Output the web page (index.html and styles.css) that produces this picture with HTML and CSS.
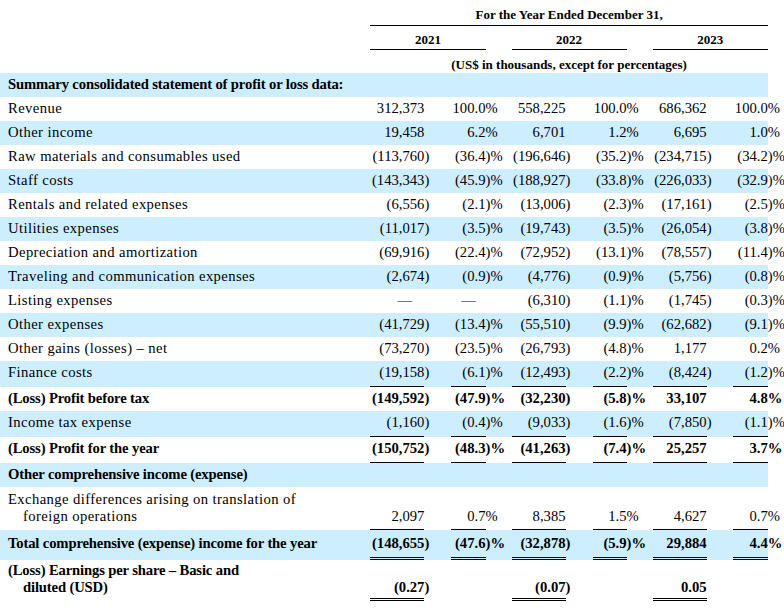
FILE: index.html
```html
<!DOCTYPE html>
<html>
<head>
<meta charset="utf-8">
<link rel="stylesheet" href="styles.css">
</head>
<body>
<table class="fin">
<colgroup>
<col class="c-label"><col class="c-v"><col class="c-s"><col class="c-p"><col class="c-ps">
<col class="c-v"><col class="c-s"><col class="c-p"><col class="c-ps">
<col class="c-v"><col class="c-s3"><col class="c-p3"><col class="c-ps3">
</colgroup>
<tbody>
<tr class="h1"><td></td><td colspan="11" class="hd line">For the Year Ended December 31,</td><td></td></tr>
<tr class="h2"><td></td><td colspan="3" class="hd line">2021</td><td></td><td colspan="3" class="hd line">2022</td><td></td><td colspan="3" class="hd line">2023</td><td></td></tr>
<tr class="h3"><td></td><td colspan="11" class="hd">(US$ in thousands, except for percentages)</td><td></td></tr>

<tr class="sh b"><td class="lb">Summary consolidated statement of profit or loss data:</td><td></td><td></td><td></td><td></td><td></td><td></td><td></td><td></td><td></td><td></td><td></td><td class="ns"></td></tr>

<tr><td class="lb">Revenue</td><td class="v">312,373</td><td class="s"></td><td class="v">100.0</td><td class="s">%</td><td class="v">558,225</td><td class="s"></td><td class="v">100.0</td><td class="s">%</td><td class="v">686,362</td><td class="s"></td><td class="v">100.0</td><td class="s ns">%</td></tr>
<tr class="sh"><td class="lb">Other income</td><td class="v">19,458</td><td class="s"></td><td class="v">6.2</td><td class="s">%</td><td class="v">6,701</td><td class="s"></td><td class="v">1.2</td><td class="s">%</td><td class="v">6,695</td><td class="s"></td><td class="v">1.0</td><td class="s ns">%</td></tr>
<tr><td class="lb">Raw materials and consumables used</td><td class="v">(113,760</td><td class="s">)</td><td class="v">(36.4</td><td class="s">)%</td><td class="v">(196,646</td><td class="s">)</td><td class="v">(35.2</td><td class="s">)%</td><td class="v">(234,715</td><td class="s">)</td><td class="v">(34.2</td><td class="s ns">)%</td></tr>
<tr class="sh"><td class="lb">Staff costs</td><td class="v">(143,343</td><td class="s">)</td><td class="v">(45.9</td><td class="s">)%</td><td class="v">(188,927</td><td class="s">)</td><td class="v">(33.8</td><td class="s">)%</td><td class="v">(226,033</td><td class="s">)</td><td class="v">(32.9</td><td class="s ns">)%</td></tr>
<tr><td class="lb">Rentals and related expenses</td><td class="v">(6,556</td><td class="s">)</td><td class="v">(2.1</td><td class="s">)%</td><td class="v">(13,006</td><td class="s">)</td><td class="v">(2.3</td><td class="s">)%</td><td class="v">(17,161</td><td class="s">)</td><td class="v">(2.5</td><td class="s ns">)%</td></tr>
<tr class="sh"><td class="lb">Utilities expenses</td><td class="v">(11,017</td><td class="s">)</td><td class="v">(3.5</td><td class="s">)%</td><td class="v">(19,743</td><td class="s">)</td><td class="v">(3.5</td><td class="s">)%</td><td class="v">(26,054</td><td class="s">)</td><td class="v">(3.8</td><td class="s ns">)%</td></tr>
<tr><td class="lb">Depreciation and amortization</td><td class="v">(69,916</td><td class="s">)</td><td class="v">(22.4</td><td class="s">)%</td><td class="v">(72,952</td><td class="s">)</td><td class="v">(13.1</td><td class="s">)%</td><td class="v">(78,557</td><td class="s">)</td><td class="v">(11.4</td><td class="s ns">)%</td></tr>
<tr class="sh"><td class="lb">Traveling and communication expenses</td><td class="v">(2,674</td><td class="s">)</td><td class="v">(0.9</td><td class="s">)%</td><td class="v">(4,776</td><td class="s">)</td><td class="v">(0.9</td><td class="s">)%</td><td class="v">(5,756</td><td class="s">)</td><td class="v">(0.8</td><td class="s ns">)%</td></tr>
<tr><td class="lb">Listing expenses</td><td class="v dash dash-v">—</td><td class="s"></td><td class="v dash">—</td><td class="s"></td><td class="v">(6,310</td><td class="s">)</td><td class="v">(1.1</td><td class="s">)%</td><td class="v">(1,745</td><td class="s">)</td><td class="v">(0.3</td><td class="s ns">)%</td></tr>
<tr class="sh"><td class="lb">Other expenses</td><td class="v">(41,729</td><td class="s">)</td><td class="v">(13.4</td><td class="s">)%</td><td class="v">(55,510</td><td class="s">)</td><td class="v">(9.9</td><td class="s">)%</td><td class="v">(62,682</td><td class="s">)</td><td class="v">(9.1</td><td class="s ns">)%</td></tr>
<tr><td class="lb">Other gains (losses) – net</td><td class="v">(73,270</td><td class="s">)</td><td class="v">(23.5</td><td class="s">)%</td><td class="v">(26,793</td><td class="s">)</td><td class="v">(4.8</td><td class="s">)%</td><td class="v">1,177</td><td class="s"></td><td class="v">0.2</td><td class="s ns">%</td></tr>
<tr class="sh lr"><td class="lb">Finance costs</td><td class="v line">(19,158</td><td class="s">)</td><td class="v line">(6.1</td><td class="s">)%</td><td class="v line">(12,493</td><td class="s">)</td><td class="v line">(2.2</td><td class="s">)%</td><td class="v line">(8,424</td><td class="s">)</td><td class="v line">(1.2</td><td class="s ns">)%</td></tr>
<tr class="b"><td class="lb">(Loss) Profit before tax</td><td class="v">(149,592</td><td class="s">)</td><td class="v">(47.9</td><td class="s">)%</td><td class="v">(32,230</td><td class="s">)</td><td class="v">(5.8</td><td class="s">)%</td><td class="v">33,107</td><td class="s"></td><td class="v">4.8</td><td class="s ns">%</td></tr>
<tr class="sh lr"><td class="lb">Income tax expense</td><td class="v line">(1,160</td><td class="s">)</td><td class="v line">(0.4</td><td class="s">)%</td><td class="v line">(9,033</td><td class="s">)</td><td class="v line">(1.6</td><td class="s">)%</td><td class="v line">(7,850</td><td class="s">)</td><td class="v line">(1.1</td><td class="s ns">)%</td></tr>
<tr class="b lr"><td class="lb">(Loss) Profit for the year</td><td class="v line">(150,752</td><td class="s">)</td><td class="v line">(48.3</td><td class="s">)%</td><td class="v line">(41,263</td><td class="s">)</td><td class="v line">(7.4</td><td class="s">)%</td><td class="v line">25,257</td><td class="s"></td><td class="v line">3.7</td><td class="s ns">%</td></tr>
<tr class="sh b"><td class="lb">Other comprehensive income (expense)</td><td></td><td></td><td></td><td></td><td></td><td></td><td></td><td></td><td></td><td></td><td></td><td class="ns"></td></tr>
<tr class="bot exch"><td class="lb hang">Exchange differences arising on translation of<br>foreign operations</td><td class="v line">2,097</td><td class="s"></td><td class="v line">0.7</td><td class="s">%</td><td class="v line">8,385</td><td class="s"></td><td class="v line">1.5</td><td class="s">%</td><td class="v line">4,627</td><td class="s"></td><td class="v line">0.7</td><td class="s ns">%</td></tr>
<tr class="sh b tot"><td class="lb">Total comprehensive (expense) income for the year</td><td class="v dbl">(148,655</td><td class="s">)</td><td class="v dbl">(47.6</td><td class="s">)%</td><td class="v dbl">(32,878</td><td class="s">)</td><td class="v dbl">(5.9</td><td class="s">)%</td><td class="v dbl">29,884</td><td class="s"></td><td class="v dbl">4.4</td><td class="s ns">%</td></tr>
<tr class="b bot eps"><td class="lb hang">(Loss) Earnings per share – Basic and<br>diluted (USD)</td><td class="v dbl">(0.27</td><td class="s">)</td><td></td><td></td><td class="v dbl">(0.07</td><td class="s">)</td><td></td><td></td><td class="v dbl">0.05</td><td class="s"></td><td></td><td class="ns"></td></tr>
</tbody>
</table>
</body>
</html>
```
FILE: styles.css
```css
html, body {
  margin: 0;
  padding: 0;
  background: #ffffff;
}
body {
  font-family: "Liberation Serif", "Times New Roman", serif;
  font-size: 14.67px;
  line-height: 17px;
  color: #000000;
}
.fin {
  width: 784px;
  table-layout: fixed;
  border-collapse: separate;
  border-spacing: 0;
}
.c-label { width: 370px; }
.c-v { width: 54px; }
.c-s { width: 27px; }
.c-p { width: 34px; }
.c-ps { width: 26px; }
.c-s3 { width: 26px; }
.c-p3 { width: 35px; }
.c-ps3 { width: 16px; }

.fin td {
  padding: 3px 0 4px 0;
  vertical-align: top;
  white-space: nowrap;
  overflow: visible;
}
.fin .hd {
  font-weight: bold;
  font-size: 13px;
  text-align: center;
}
.fin .h1 td { padding: 6px 0 2px 0; }
.fin .h2 td { padding: 5px 0 1px 0; }
.fin .h3 td { padding: 6px 0 0 0; }
.fin td.line { border-bottom: 1px solid #000000; }
.fin td.dbl { border-bottom: 3px double #000000; }

/* rows that carry a single rule under the figures */
.fin tr.lr td { padding-bottom: 6px; }
.fin tr.lr td.line { padding-bottom: 5px; }

.fin tr.sh td { background: #cceeff; }
.fin tr.sh td.ns { background: transparent; }
.fin tr.b td { font-weight: bold; }
.fin tr.bot td { vertical-align: bottom; }
.fin tr.bot td.lb { vertical-align: top; }

.fin tr.exch td { padding-top: 4px; padding-bottom: 5px; }
.fin tr.exch td.line { padding-bottom: 4px; }
.fin tr.tot td { padding-top: 5px; padding-bottom: 8px; }
.fin tr.tot td.dbl { padding-bottom: 5px; }
.fin tr.eps td { padding-top: 2px; padding-bottom: 5px; }
.fin tr.eps td.dbl { padding-bottom: 2px; }

.fin td.lb {
  padding-left: 8px;
  white-space: normal;
  letter-spacing: 0.4px;
}
.fin tr.b td.lb { letter-spacing: -0.15px; }
.fin tr td.hang {
  padding-left: 23px;
  text-indent: -15px;
}
.fin td.v { text-align: right; }
.fin td.s { text-align: left; }
.fin td.dash { text-align: center; }
.fin td.dash-v { padding-left: 15px; }
```
